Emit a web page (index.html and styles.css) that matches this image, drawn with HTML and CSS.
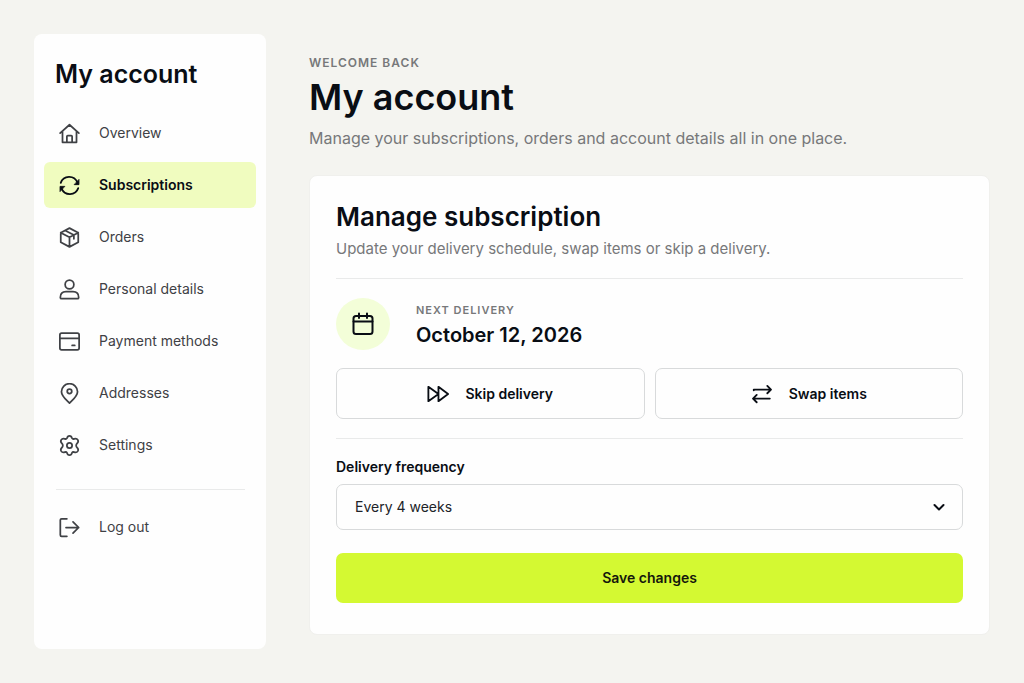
FILE: index.html
```
<!DOCTYPE html>
<html lang="en">
<head>
<meta charset="utf-8">
<meta name="viewport" content="width=device-width, initial-scale=1">
<title>My account</title>
<link rel="stylesheet" href="styles.css">
</head>
<body>
<div class="page">
  <aside class="sidebar">
    <h2 class="sidebar-title">My account</h2>
    <nav class="nav" aria-label="Account">
      <a class="nav-link" href="#overview"><svg class="icon" viewBox="0 0 24 24"><path d="M1.300 11.500 12 2l10.700 9.500M4 9.200V22H20V9.200M9 22V15.500a1 1 0 0 1 1-1h4a1 1 0 0 1 1 1V22"/></svg>Overview</a>
      <a class="nav-link active" href="#subscriptions" aria-current="page"><svg class="icon" viewBox="0 0 24 24"><path d="M2 9A10.200 10.200 0 0 1 21 8.500M22 15A10.200 10.200 0 0 1 3 15.500"/><path class="solid" d="M22.800 5.500v5.500h-5zM1.200 18.500V13h5z"/></svg>Subscriptions</a>
      <a class="nav-link" href="#orders"><svg class="icon" viewBox="0 0 24 24"><path d="M12 1.300 22 6.500V17.500L12 22.700 2 17.500V6.500ZM2 6.500l10 5.200 10-5.200M12 11.700v11M7 3.900l10 5.300v4.300"/></svg>Orders</a>
      <a class="nav-link" href="#details"><svg class="icon" viewBox="0 0 24 24"><circle cx="12" cy="6.300" r="5"/><path d="M1.500 21c0-4.500 3-6.500 6.500-6.500h8c3.500 0 6.500 2 6.500 6.500 0 1-.5 1.500-1.500 1.500H3C2 22.500 1.500 22 1.500 21Z"/></svg>Personal details</a>
      <a class="nav-link" href="#payment"><svg class="icon" viewBox="0 0 24 24"><rect x="1" y="2.500" width="22" height="19" rx="2"/><path d="M1 8.500h22M15 16.500h3"/></svg>Payment methods</a>
      <a class="nav-link" href="#addresses"><svg class="icon" viewBox="0 0 24 24"><path d="M12 23C8 19 2.800 15 2.800 10a9.200 9.200 0 0 1 18.400 0c0 5-5.200 9-9.200 13Z"/><circle cx="12" cy="9.500" r="2.600"/></svg>Addresses</a>
      <a class="nav-link" href="#settings"><svg class="icon" viewBox="0 0 24 24"><path d="M9.200 3.600Q9.700 1 12 1T14.800 3.600Q15.600 5 17.400 4.400 20.200 3.500 21.500 5.600 22.700 7.700 20.700 9.500 19.600 10.500 19.600 12T20.700 14.500Q22.700 16.300 21.500 18.400 20.200 20.500 17.400 19.600 15.600 19 14.800 20.400 14.300 23 12 23T9.200 20.400Q8.400 19 6.600 19.600 3.800 20.500 2.500 18.400 1.300 16.300 3.300 14.500 4.400 13.500 4.400 12T3.300 9.500Q1.300 7.700 2.500 5.600 3.800 3.500 6.600 4.400 8.400 5 9.200 3.600Z"/><circle cx="12" cy="12" r="3"/></svg>Settings</a>
    </nav>
    <hr class="sidebar-rule">
    <a class="nav-link" href="#logout"><svg class="icon" viewBox="0 0 24 24"><path d="M9 2H3A1.500 1.500 0 0 0 1.500 3.500v17A1.500 1.500 0 0 0 3 22h6M8 12h14.500M16 5.500l6.500 6.500-6.500 6.500"/></svg>Log out</a>
  </aside>
  <main class="main">
    <header class="intro">
      <p class="eyebrow">WELCOME BACK</p>
      <h1 class="title">My account</h1>
      <p class="lead">Manage your subscriptions, orders and account details all in one place.</p>
    </header>
    <section class="card">
      <h2 class="card-title">Manage subscription</h2>
      <p class="card-text">Update your delivery schedule, swap items or skip a delivery.</p>
      <hr class="rule">
      <div class="delivery">
        <span class="badge"><svg class="badge-icon" viewBox="0 0 24 24"><rect x="2.500" y="4" width="19" height="18" rx="2.500"/><path d="M2.500 9.500h19M8 1.500v4.500M16 1.500v4.500"/></svg></span>
        <div class="delivery-text">
          <p class="delivery-label">NEXT DELIVERY</p>
          <p class="delivery-date">October 12, 2026</p>
        </div>
      </div>
      <div class="actions">
        <button class="button" type="button"><svg class="button-icon" viewBox="0 0 24 24"><path d="M1.500 4.200V19.800L12.500 12ZM12.500 4.200V19.800L23 12Z"/></svg>Skip delivery</button>
        <button class="button" type="button"><svg class="button-icon" viewBox="0 0 24 24"><path d="M3 8V7.200h18.500M17.800 3.200l4 4-4 4M20.500 17H2.500M6.200 13l-4 4 4 4"/></svg>Swap items</button>
      </div>
      <hr class="rule">
      <form class="form">
        <label class="label" for="frequency">Delivery frequency</label>
        <div class="select-wrap">
          <select class="select" id="frequency">
            <option>Every 2 weeks</option>
            <option selected>Every 4 weeks</option>
            <option>Every 6 weeks</option>
          </select>
          <svg class="chevron" viewBox="0 0 14 14"><path d="M2.500 5 7 9.500 11.500 5"/></svg>
        </div>
        <button class="save" type="button">Save changes</button>
      </form>
    </section>
  </main>
</div>
</body>
</html>
```
FILE: styles.css
```
* {
  box-sizing: border-box;
}

body {
  margin: 0;
  background: #f4f4f0;
  color: #090d14;
  font-family: Inter, "Liberation Sans", sans-serif;
}

h1, h2, p {
  margin: 0;
}

svg {
  flex: none;
  fill: none;
  stroke: currentColor;
  stroke-width: 2;
  stroke-linecap: round;
  stroke-linejoin: round;
}

.page {
  display: grid;
  grid-template-columns: 232px minmax(0, 1fr);
  gap: 43px;
  min-height: 100vh;
  padding: 34px;
}

.sidebar {
  padding: 24px 10px;
  background: #fefefe;
  border-radius: 8px;
}

.sidebar-title {
  padding: 0 11px;
  font-size: 25px;
  line-height: 32px;
  font-weight: 600;
}

.nav {
  display: grid;
  gap: 6px;
  margin-top: 20px;
}

.nav-link {
  display: flex;
  align-items: center;
  gap: 19px;
  height: 46px;
  padding: 0 15px;
  border-radius: 6px;
  color: #3f4145;
  font-size: 14px;
  line-height: 20px;
  text-decoration: none;
}

.active {
  background: #f0fcbf;
  color: #090d14;
  font-weight: 600;
}

.icon {
  width: 21px;
  height: 21px;
}

.solid {
  fill: currentColor;
  stroke-width: 1;
}

.sidebar-rule {
  margin: 21px 11px 14px 12px;
  border: 0;
  border-top: 1px solid #e9eaea;
}

.main {
  padding-top: 20px;
}

.eyebrow {
  color: #77787a;
  font-size: 12px;
  line-height: 18px;
  font-weight: 600;
  letter-spacing: 1px;
}

.title {
  margin-top: 2px;
  font-size: 36px;
  line-height: 46px;
  font-weight: 600;
}

.lead {
  margin-top: 8px;
  color: #77787a;
  font-size: 16px;
  line-height: 20px;
}

.card {
  margin-top: 27px;
  padding: 25px 26px 31px;
  background: #fefefe;
  border: 1px solid #f0f0ed;
  border-radius: 8px;
}

.card-title {
  font-size: 26px;
  line-height: 32px;
  font-weight: 600;
}

.card-text {
  margin-top: 6px;
  color: #77787a;
  font-size: 15px;
  line-height: 20px;
}

.rule {
  margin: 19px 0;
  border: 0;
  border-top: 1px solid #e9eaea;
}

.delivery {
  display: flex;
  align-items: center;
  gap: 26px;
}

.badge {
  display: grid;
  place-items: center;
  width: 54px;
  height: 52px;
  border-radius: 50%;
  background: #f3fed8;
}

.badge-icon {
  width: 24px;
  height: 24px;
}

.delivery-text {
  padding-top: 3px;
}

.delivery-label {
  color: #77787a;
  font-size: 11px;
  line-height: 16px;
  font-weight: 600;
  letter-spacing: 1px;
}

.delivery-date {
  margin-top: 3px;
  font-size: 20px;
  line-height: 28px;
  font-weight: 600;
}

.actions {
  display: grid;
  grid-template-columns: 1fr 1fr;
  gap: 10px;
  margin-top: 18px;
}

.button {
  display: flex;
  align-items: center;
  justify-content: center;
  gap: 16px;
  height: 51px;
  background: #fefefe;
  border: 1px solid #d8dadb;
  border-radius: 7px;
  color: inherit;
  font: 600 14px/20px Inter, "Liberation Sans", sans-serif;
}

.button-icon {
  width: 22px;
  height: 22px;
}

.form {
  display: grid;
}

.label {
  font-size: 14px;
  line-height: 18px;
  font-weight: 600;
}

.select-wrap {
  display: grid;
  align-items: center;
  margin-top: 8px;
}

.select {
  grid-area: 1 / 1;
  appearance: none;
  height: 46px;
  padding: 0 18px;
  background: #fefefe;
  border: 1px solid #d8dadb;
  border-radius: 7px;
  color: #202329;
  font: 400 14px/20px Inter, "Liberation Sans", sans-serif;
}

.chevron {
  grid-area: 1 / 1;
  justify-self: end;
  width: 14px;
  height: 14px;
  margin-right: 17px;
  pointer-events: none;
}

.save {
  height: 50px;
  margin-top: 23px;
  background: #d4f932;
  border: 0;
  border-radius: 7px;
  color: #14180c;
  font: 600 14px/20px Inter, "Liberation Sans", sans-serif;
}
```
